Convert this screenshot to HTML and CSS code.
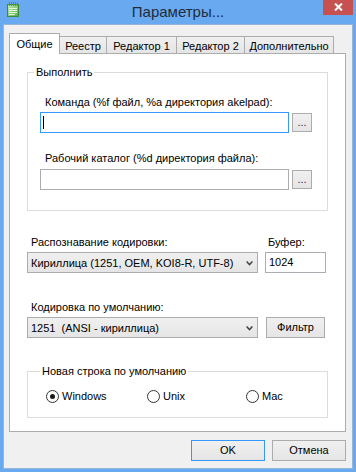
FILE: index.html
```html
<!DOCTYPE html>
<html lang="ru">
<head>
<meta charset="utf-8">
<title>Параметры...</title>
<link rel="stylesheet" href="styles.css">
</head>
<body>
<div class="window">
  <div class="titlebar">
    <svg class="app-icon" width="14" height="15" viewBox="0 0 14 15">
      <defs>
        <linearGradient id="pad" x1="0" y1="0" x2="1" y2="1">
          <stop offset="0" stop-color="#c9f0b5"/>
          <stop offset="1" stop-color="#4fa843"/>
        </linearGradient>
      </defs>
      <rect x="1.5" y="2.5" width="11" height="12" fill="url(#pad)" stroke="#3e8a35"/>
      <g stroke="#e4f7da" stroke-width="1">
        <line x1="3" y1="6.5" x2="11" y2="6.5"/>
        <line x1="3" y1="8.5" x2="11" y2="8.5"/>
        <line x1="3" y1="10.5" x2="11" y2="10.5"/>
        <line x1="3" y1="12.5" x2="9" y2="12.5"/>
      </g>
      <g fill="#7a7a7a">
        <rect x="3" y="0" width="1" height="4"/>
        <rect x="5" y="0" width="1" height="4"/>
        <rect x="7" y="0" width="1" height="4"/>
        <rect x="9" y="0" width="1" height="4"/>
        <rect x="11" y="0" width="1" height="4"/>
      </g>
    </svg>
    <div class="title">Параметры...</div>
    <div class="close">
      <svg width="9" height="8" viewBox="0 0 9 8"><path d="M1 0.5 L8 7.5 M8 0.5 L1 7.5" stroke="#fff" stroke-width="2" fill="none"/></svg>
    </div>
  </div>
  <div class="client">
    <div class="tabs">
      <div class="tab active w-general">Общие</div>
      <div class="tab w-registry">Реестр</div>
      <div class="tab w-ed1">Редактор 1</div>
      <div class="tab w-ed2">Редактор 2</div>
      <div class="tab w-more">Дополнительно</div>
    </div>
    <div class="panel">
      <fieldset class="group run-group">
        <legend>Выполнить</legend>
        <div class="label indent">Команда (%f файл, %a директория akelpad):</div>
        <div class="path-row">
          <div class="input path focused"><span class="caret"></span></div>
          <div class="btn dots">...</div>
        </div>
        <div class="label indent second">Рабочий каталог (%d директория файла):</div>
        <div class="path-row second-row">
          <div class="input path"></div>
          <div class="btn dots">...</div>
        </div>
      </fieldset>

      <div class="enc-row detect-row">
        <div class="col main-col">
          <div class="label sel-label">Распознавание кодировки:</div>
          <div class="select">
            <span>Кириллица (1251, OEM, KOI8-R, UTF-8)</span>
            <svg class="chev" width="7" height="5" viewBox="0 0 7 5"><path d="M0.6 0.6 L3.5 3.6 L6.4 0.6" fill="none" stroke="#444" stroke-width="1.5"/></svg>
          </div>
        </div>
        <div class="col side-col">
          <div class="label buf-label">Буфер:</div>
          <div class="input buffer">1024</div>
        </div>
      </div>

      <div class="enc-row default-row">
        <div class="col main-col">
          <div class="label sel-label">Кодировка по умолчанию:</div>
          <div class="select">
            <span class="pre">1251  (ANSI - кириллица)</span>
            <svg class="chev" width="7" height="5" viewBox="0 0 7 5"><path d="M0.6 0.6 L3.5 3.6 L6.4 0.6" fill="none" stroke="#444" stroke-width="1.5"/></svg>
          </div>
        </div>
        <div class="col side-col">
          <div class="btn filter">Фильтр</div>
        </div>
      </div>

      <fieldset class="group newline-group">
        <legend>Новая строка по умолчанию</legend>
        <div class="radios">
          <div class="radio r-win"><span class="circle checked"></span><span>Windows</span></div>
          <div class="radio r-unix"><span class="circle"></span><span>Unix</span></div>
          <div class="radio"><span class="circle"></span><span>Mac</span></div>
        </div>
      </fieldset>
    </div>
    <div class="actions">
      <div class="btn action default">OK</div>
      <div class="btn action">Отмена</div>
    </div>
  </div>
</div>
</body>
</html>
```
FILE: styles.css
```css
* { box-sizing: border-box; }
html, body { margin: 0; padding: 0; }
body {
  width: 356px;
  height: 472px;
  overflow: hidden;
  background: #69a9f0;
  font-family: "Liberation Sans", Arial, sans-serif;
  font-size: 11px;
  color: #000;
}
.window {
  width: 356px;
  height: 472px;
  background: #69a9f0;
  padding: 0 3px 3px;
  display: flex;
  flex-direction: column;
}
.titlebar {
  height: 24px;
  display: grid;
  grid-template-columns: 1fr auto 1fr;
  align-items: start;
}
.app-icon { margin: 2px 0 0 3px; display: block; }
.title {
  font-size: 15px;
  line-height: 23px;
  color: #1f2c3b;
}
.close {
  justify-self: end;
  width: 30px;
  height: 15px;
  background: #c75050;
  display: flex;
  align-items: center;
  justify-content: center;
}
.close svg { display: block; margin-top: -1px; }
.client {
  flex: 1;
  background: #f0f0f0;
  border: 1px solid #98b4d8;
  padding: 8px 5px 0;
  display: flex;
  flex-direction: column;
}
.tabs {
  display: flex;
  align-items: flex-end;
  position: relative;
  z-index: 1;
}
.tab {
  height: 17px;
  border: 1px solid #acacac;
  border-bottom: 0;
  background: linear-gradient(#f0f0f0, #e5e5e5);
  padding-top: 2px;
  line-height: 14px;
  text-align: center;
  white-space: nowrap;
  margin-left: -1px;
}
.tab.active {
  height: 21px;
  background: #fff;
  padding-top: 3px;
  margin-bottom: -1px;
  margin-left: 0;
  position: relative;
  z-index: 2;
}
.w-general { width: 51px; }
.w-registry { width: 48px; }
.w-ed1 { width: 71px; }
.w-ed2 { width: 69px; }
.w-more { width: 90px; }

.panel {
  width: 337px;
  background: #fff;
  border: 1px solid #acacac;
  padding: 11px 17px 13px;
}
.group {
  margin: 0;
  min-width: 0;
  border: 1px solid #dcdcdc;
  padding: 16px 15px 20px 12px;
}
.group legend {
  padding: 0 2px;
  margin-left: -6px;
  line-height: 14px;
}
.label { line-height: 14px; white-space: nowrap; }
.label.indent { margin-left: 5px; }
.label.second { margin-top: 18px; }
.path-row {
  display: flex;
  gap: 3px;
  margin-top: 3px;
  height: 21px;
}
.path-row.second-row { margin-top: 4px; }
.input {
  height: 21px;
  background: #fff;
  border: 1px solid #abadb3;
  line-height: 19px;
  padding: 0 3px;
}
.input.path { width: 250px; }
.input.focused { border-color: #3399ff; }
.caret {
  display: inline-block;
  width: 1px;
  height: 13px;
  background: #000;
  margin-left: -1px;
  vertical-align: middle;
  position: relative;
  top: -1px;
}
.btn {
  border: 1px solid #acacac;
  background: linear-gradient(#f0f0f0, #e5e5e5);
  text-align: center;
  color: #000;
}
.btn.dots {
  width: 20px;
  height: 19px;
  margin-top: 1px;
  line-height: 17px;
  color: #3a1e4a;
}
.enc-row {
  display: flex;
  gap: 7px;
}
.detect-row { margin-top: 24px; }
.default-row { margin-top: 27px; }
.col { display: flex; flex-direction: column; justify-content: flex-end; }
.main-col { width: 231px; }
.side-col { width: 61px; }
.sel-label { margin-left: 4px; }
.buf-label { margin-left: 3px; }
.label + .select, .label + .input { margin-top: 3px; }
.select {
  height: 21px;
  border: 1px solid #acacac;
  background: linear-gradient(#f0f0f0, #e5e5e5);
  display: flex;
  align-items: center;
  justify-content: space-between;
  padding: 0 4px 0 3px;
  white-space: nowrap;
}
.select span { line-height: 14px; }
.pre { white-space: pre; }
.chev { display: block; margin-top: 1px; }
.input.buffer { width: 61px; }
.btn.filter {
  width: 59px;
  height: 21px;
  margin-left: 1px;
  line-height: 19px;
}
.newline-group {
  margin-top: 26px;
  padding: 11px 10px 14px 18px;
}
.radios { display: flex; }
.radio {
  display: flex;
  align-items: center;
  gap: 3px;
  line-height: 14px;
}
.r-win { width: 101px; }
.r-unix { width: 99px; }
.circle {
  width: 13px;
  height: 13px;
  border: 1px solid #333;
  border-radius: 50%;
  background: #fff;
  display: flex;
  align-items: center;
  justify-content: center;
}
.circle.checked::after {
  content: "";
  width: 5px;
  height: 5px;
  border-radius: 50%;
  background: #1a1a1a;
}
.actions {
  display: flex;
  justify-content: flex-end;
  gap: 7px;
  margin-top: 8px;
  margin-right: 1px;
}
.btn.action {
  width: 74px;
  height: 21px;
  line-height: 19px;
}
.btn.default { border-color: #3399ff; }
```
